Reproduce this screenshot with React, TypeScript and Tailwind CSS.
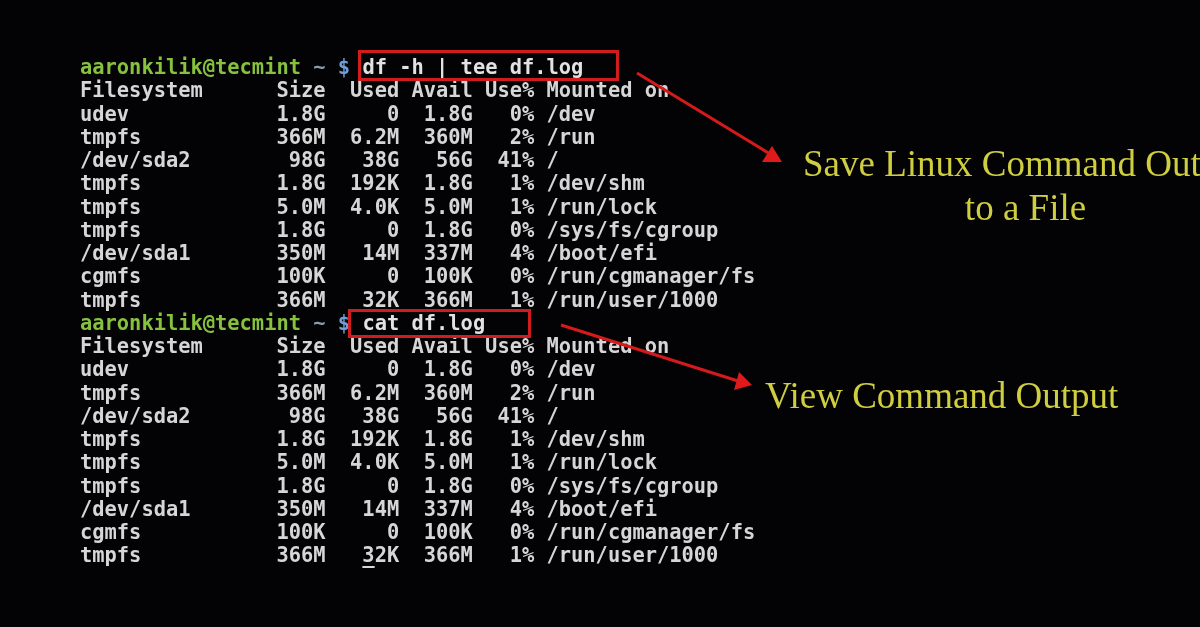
import React from "react";

const block = [
  "Filesystem      Size  Used Avail Use% Mounted on",
  "udev            1.8G     0  1.8G   0% /dev",
  "tmpfs           366M  6.2M  360M   2% /run",
  "/dev/sda2        98G   38G   56G  41% /",
  "tmpfs           1.8G  192K  1.8G   1% /dev/shm",
  "tmpfs           5.0M  4.0K  5.0M   1% /run/lock",
  "tmpfs           1.8G     0  1.8G   0% /sys/fs/cgroup",
  "/dev/sda1       350M   14M  337M   4% /boot/efi",
  "cgmfs           100K     0  100K   0% /run/cgmanager/fs",
];

function Prompt({ cmd }: { cmd: string }) {
  return (
    <div>
      <span className="text-[#86c23e]">aaronkilik@tecmint</span>
      <span className="text-[#8c9bb0]"> ~ </span>
      <span className="text-[#6f9fd6]">$</span>
      <span className="text-[#e2e2e2]"> {cmd}</span>
    </div>
  );
}

function Output({ cursor }: { cursor?: boolean }) {
  return (
    <>
      {block.map((l, i) => (
        <div key={i}>{l}</div>
      ))}
      {cursor ? (
        <div>
          {"tmpfs           366M   "}
          <span className="underline decoration-2 underline-offset-4">3</span>
          {"2K  366M   1% /run/user/1000"}
        </div>
      ) : (
        <div>{"tmpfs           366M   32K  366M   1% /run/user/1000"}</div>
      )}
    </>
  );
}

export default function App() {
  return (
    <div className="relative w-[1200px] h-[627px] overflow-hidden bg-[#030306]">
      <div
        className="pl-[80px] pt-[56px] whitespace-pre text-[20.4px] leading-[23.25px] font-bold text-[#d6d6d6] blur-[0.35px]"
        style={{ fontFamily: '"DejaVu Sans Mono", "Liberation Mono", monospace' }}
      >
        <Prompt cmd="df -h | tee df.log" />
        <Output />
        <Prompt cmd="cat df.log" />
        <Output cursor />
      </div>

      <svg
        className="absolute left-0 top-0 pointer-events-none"
        width="1200"
        height="627"
        viewBox="0 0 1200 627"
      >
        <rect x="359.5" y="51.5" width="258" height="28" fill="none" stroke="#d01c1c" strokeWidth="3" />
        <rect x="349.5" y="310.5" width="180" height="26" fill="none" stroke="#d01c1c" strokeWidth="3" />
        <line x1="637" y1="73" x2="770" y2="154" stroke="#d41a1a" strokeWidth="3" />
        <polygon points="782,162 762,162 772,146" fill="#e01a1a" />
        <line x1="561" y1="325" x2="738" y2="381" stroke="#d41a1a" strokeWidth="3" />
        <polygon points="752,385 734,390 739,372" fill="#e01a1a" />
      </svg>

      <div
        className="absolute left-[803px] top-[142px] text-[37px] leading-[44px] text-[#cfcd40] whitespace-nowrap flex flex-col items-center blur-[0.3px]"
        style={{ fontFamily: '"Liberation Serif", "Times New Roman", serif' }}
      >
        <div>Save Linux Command Output</div>
        <div>to a File</div>
      </div>
      <div
        className="absolute left-[765px] top-[374px] text-[37px] leading-[44px] text-[#cfcd40] whitespace-nowrap blur-[0.3px]"
        style={{ fontFamily: '"Liberation Serif", "Times New Roman", serif' }}
      >
        View Command Output
      </div>
    </div>
  );
}
